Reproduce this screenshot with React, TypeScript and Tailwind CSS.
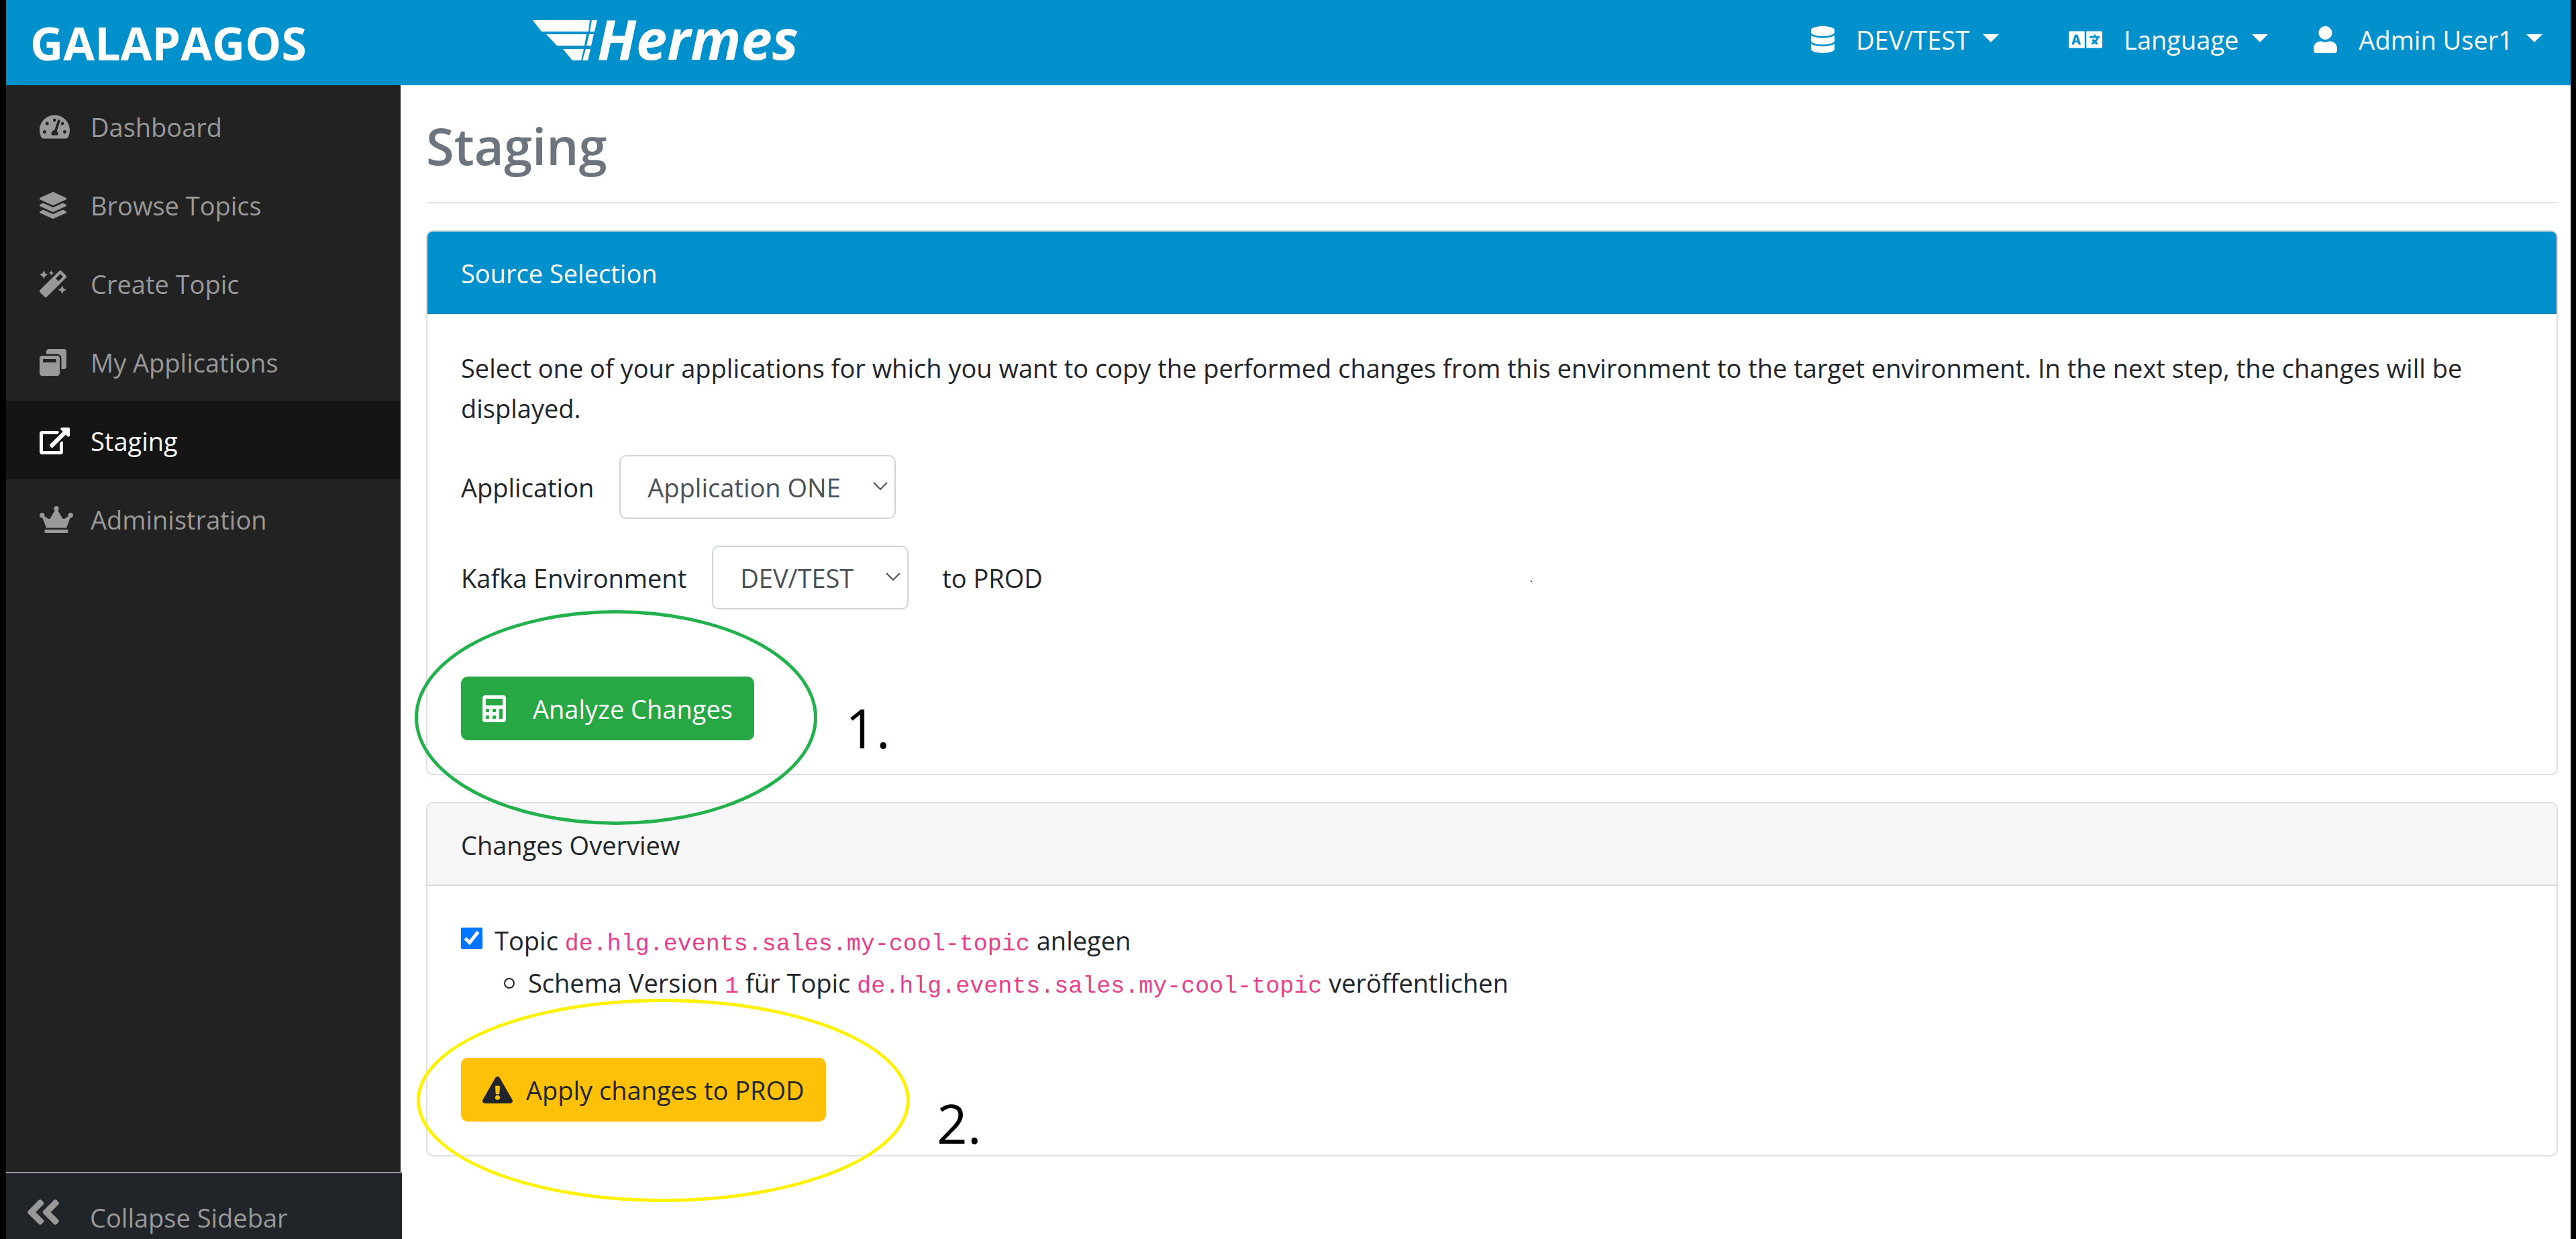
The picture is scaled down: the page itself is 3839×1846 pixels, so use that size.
import type { ReactNode } from "react";
import {
  FaAngleDoubleLeft,
  FaCalculator,
  FaCrown,
  FaDatabase,
  FaExclamationTriangle,
  FaLanguage,
  FaLayerGroup,
  FaMagic,
  FaTachometerAlt,
  FaUser,
  FaWindowRestore,
} from "react-icons/fa";

const TOPIC = "de.hlg.events.sales.my-cool-topic";

function ExternalLinkIcon() {
  return (
    <svg viewBox="0 0 576 512" className="h-10 w-[45px]" fill="currentColor" aria-hidden="true">
      <path d="M576 24v127.984c0 21.461-25.96 31.98-40.971 16.971l-35.707-35.709-243.523 243.523c-9.373 9.373-24.568 9.373-33.941 0l-22.627-22.627c-9.373-9.373-9.373-24.569 0-33.941L442.756 76.676l-35.703-35.705C391.982 25.9 402.656 0 424.024 0H552c13.255 0 24 10.745 24 24zM407.029 270.794l-16 16A23.999 23.999 0 0 0 384 303.765V448H64V128h264a24.003 24.003 0 0 0 16.97-7.029l16-16C376.089 89.851 365.381 64 344 64H48C21.49 64 0 85.49 0 112v352c0 26.51 21.49 48 48 48h352c26.51 0 48-21.49 48-48V287.764c0-21.382-25.852-32.09-40.971-16.97z" />
    </svg>
  );
}

function HermesLogo() {
  return (
    <a href="#" aria-label="Hermes" className="flex items-start text-white">
      <svg viewBox="0 0 96 60" className="h-[60px] w-24" fill="currentColor" aria-hidden="true">
        <path d="M0 0H85L83 17H13z" />
        <path d="M88 0H96L92 17H85z" />
        <path d="M20 21H80L77 38H36z" />
        <path d="M84 21H91L87 38H80z" />
        <path d="M45 43H76L72 60H59z" />
        <path d="M79 43H86L82 60H74z" />
      </svg>
      <span className="text-[83px] leading-[54px] font-bold italic">Hermes</span>
    </a>
  );
}

function Caret() {
  return (
    <svg viewBox="0 0 24 12" className="mb-1 h-3 w-6" fill="currentColor" aria-hidden="true">
      <path d="M0 0h24L12 12z" />
    </svg>
  );
}

function HeaderMenu({ icon, label }: { icon: ReactNode; label: string }) {
  return (
    <button type="button" className="flex items-center text-white">
      {icon}
      <span className="ml-8">{label}</span>
      <span className="ml-5">
        <Caret />
      </span>
    </button>
  );
}

function NavItem({ icon, label, active = false }: { icon: ReactNode; label: string; active?: boolean }) {
  return (
    <li>
      <a
        href="#"
        aria-current={active ? "page" : undefined}
        className={
          active
            ? "flex h-[117px] items-center bg-[#151515] pt-0.5 pl-[50px] text-white"
            : "flex h-[117px] items-center pt-0.5 pl-[50px] text-[#999999]"
        }
      >
        <span className="w-[76px]">{icon}</span>
        {label}
      </a>
    </li>
  );
}

function SelectBox({ id, value, width }: { id: string; value: string; width: string }) {
  return (
    <div className={`relative ${width}`}>
      <select
        id={id}
        defaultValue={value}
        className="h-[95px] w-full appearance-none rounded-[10px] border-2 border-[#ced4da] bg-white pl-10 text-[#495057]"
      >
        <option value={value}>{value}</option>
      </select>
      <svg
        viewBox="0 0 22 12"
        className="pointer-events-none absolute top-10 right-3 h-3 w-[22px]"
        fill="none"
        stroke="#495057"
        strokeWidth="2"
        aria-hidden="true"
      >
        <path d="M1 1l10 10L21 1" />
      </svg>
    </div>
  );
}

function TopicCode({ children }: { children: ReactNode }) {
  return (
    <code className="font-['Liberation_Mono',monospace] text-[35px] leading-none text-[#e83e8c]">
      {children}
    </code>
  );
}

export default function App() {
  return (
    <div className="flex min-h-screen flex-col border-r-8 border-l-[9px] border-black bg-white font-['Open_Sans','Noto_Sans',sans-serif] text-[38px] leading-[60px] text-[#212529]">
      <header className="flex h-[127px] justify-between bg-[#0091cd] pr-[42px] pl-9">
        <div className="flex pt-[30px]">
          <a href="#" className="w-[749px] pt-1 text-[68px] leading-[60px] font-bold text-white">
            GALAPAGOS
          </a>
          <HermesLogo />
        </div>
        <nav className="flex h-[117px] items-center" aria-label="Account">
          <HeaderMenu icon={<FaDatabase className="h-10 w-[35px]" />} label="DEV/TEST" />
          <span className="w-[104px]" />
          <HeaderMenu icon={<FaLanguage className="h-10 w-[50px]" />} label="Language" />
          <span className="w-[68px]" />
          <HeaderMenu icon={<FaUser className="h-10 w-[35px]" />} label="Admin User1" />
        </nav>
      </header>

      <div className="flex flex-1">
        <aside className="flex w-[588px] shrink-0 flex-col bg-[#222222]">
          <ul className="flex-1 pt-0.5">
            <NavItem icon={<FaTachometerAlt className="h-10 w-[45px]" />} label="Dashboard" />
            <NavItem icon={<FaLayerGroup className="size-10" />} label="Browse Topics" />
            <NavItem icon={<FaMagic className="size-10" />} label="Create Topic" />
            <NavItem icon={<FaWindowRestore className="size-10" />} label="My Applications" />
            <NavItem icon={<ExternalLinkIcon />} label="Staging" active />
            <NavItem icon={<FaCrown className="h-10 w-[50px]" />} label="Administration" />
          </ul>
          <button
            type="button"
            className="-mr-0.5 flex h-[100px] items-start border-t-2 border-[#999999] bg-[#212529] pt-7 pl-[29px] text-[#999999]"
          >
            <FaAngleDoubleLeft className="h-[60px] w-[53px]" />
            <span className="ml-[43px] pt-2">Collapse Sidebar</span>
          </button>
        </aside>

        <main className="min-w-0 flex-1 pr-[19px] pl-[38px]">
          <h1 className="border-b-2 border-[#e5e5e5] pt-[42px] pb-9 text-[76px] leading-[96px] font-semibold text-[#6c757d]">
            Staging
          </h1>

          <section className="mt-10 rounded-[10px] border-2 border-[#dfdfdf]">
            <h2 className="rounded-t-lg border-b-2 border-[#0083b9] bg-[#0091cd] px-[50px] pt-8 pb-[29px] text-white">
              Source Selection
            </h2>
            <div className="p-[50px]">
              <p>
                Select one of your applications for which you want to copy the performed changes from this
                environment to the target environment. In the next step, the changes will be displayed.
              </p>
              <div className="mt-10 flex items-center">
                <label htmlFor="application" className="mr-[38px]">
                  Application
                </label>
                <SelectBox id="application" value="Application ONE" width="w-[412px]" />
              </div>
              <div className="relative mt-10 flex items-center">
                <label htmlFor="environment" className="mr-[38px]">
                  Kafka Environment
                </label>
                <SelectBox id="environment" value="DEV/TEST" width="w-[293px]" />
                <span className="ml-[50px]">to PROD</span>
                <span className="absolute top-[52px] left-[1594px] size-0.5 bg-[#555555]" />
              </div>
              <div className="relative mt-[100px] flex">
                <button
                  type="button"
                  className="flex h-[95px] items-center rounded-[10px] bg-[#28a745] px-8 text-white"
                >
                  <FaCalculator className="mr-10 h-10 w-[35px]" />
                  Analyze Changes
                </button>
                <div className="pointer-events-none absolute -top-[99px] -left-[69px] h-80 w-[600px] rounded-[50%] border-[5px] border-[#22b14c]" />
                <span className="absolute top-7 left-[573px] text-[80px] leading-[96px] text-black">1.</span>
              </div>
            </div>
          </section>

          <section className="mt-10 rounded-[10px] border-2 border-[#dfdfdf]">
            <h2 className="rounded-t-lg border-b-2 border-[#d8d8d8] bg-[#f7f7f7] px-[50px] pt-8 pb-[29px]">
              Changes Overview
            </h2>
            <div className="p-[50px]">
              <div className="flex items-start">
                <input
                  id="topic"
                  type="checkbox"
                  defaultChecked
                  className="mt-3 mr-[18px] size-8 accent-[#0075ff]"
                />
                <label htmlFor="topic" className="leading-[63px]">
                  Topic <TopicCode>{TOPIC}</TopicCode> anlegen
                </label>
              </div>
              <ul className="pl-16">
                <li className="flex items-center leading-[63px]">
                  <span className="mr-5 size-4 rounded-full border-2 border-[#212529]" />
                  <span>
                    Schema Version <TopicCode>1</TopicCode> für Topic <TopicCode>{TOPIC}</TopicCode>{" "}
                    veröffentlichen
                  </span>
                </li>
              </ul>
              <div className="relative mt-20 flex">
                <button
                  type="button"
                  className="flex h-[95px] items-center rounded-[10px] bg-[#ffc107] px-8 text-[#212529]"
                >
                  <FaExclamationTriangle className="mr-5 h-10 w-[45px]" />
                  Apply changes to PROD
                </button>
                <div className="pointer-events-none absolute -top-[88px] -left-[66px] h-[303px] w-[735px] rounded-[50%] border-[5px] border-[#fff200]" />
                <span className="absolute top-[49px] left-[709px] text-[80px] leading-[96px] text-black">2.</span>
              </div>
            </div>
          </section>
        </main>
      </div>
    </div>
  );
}
